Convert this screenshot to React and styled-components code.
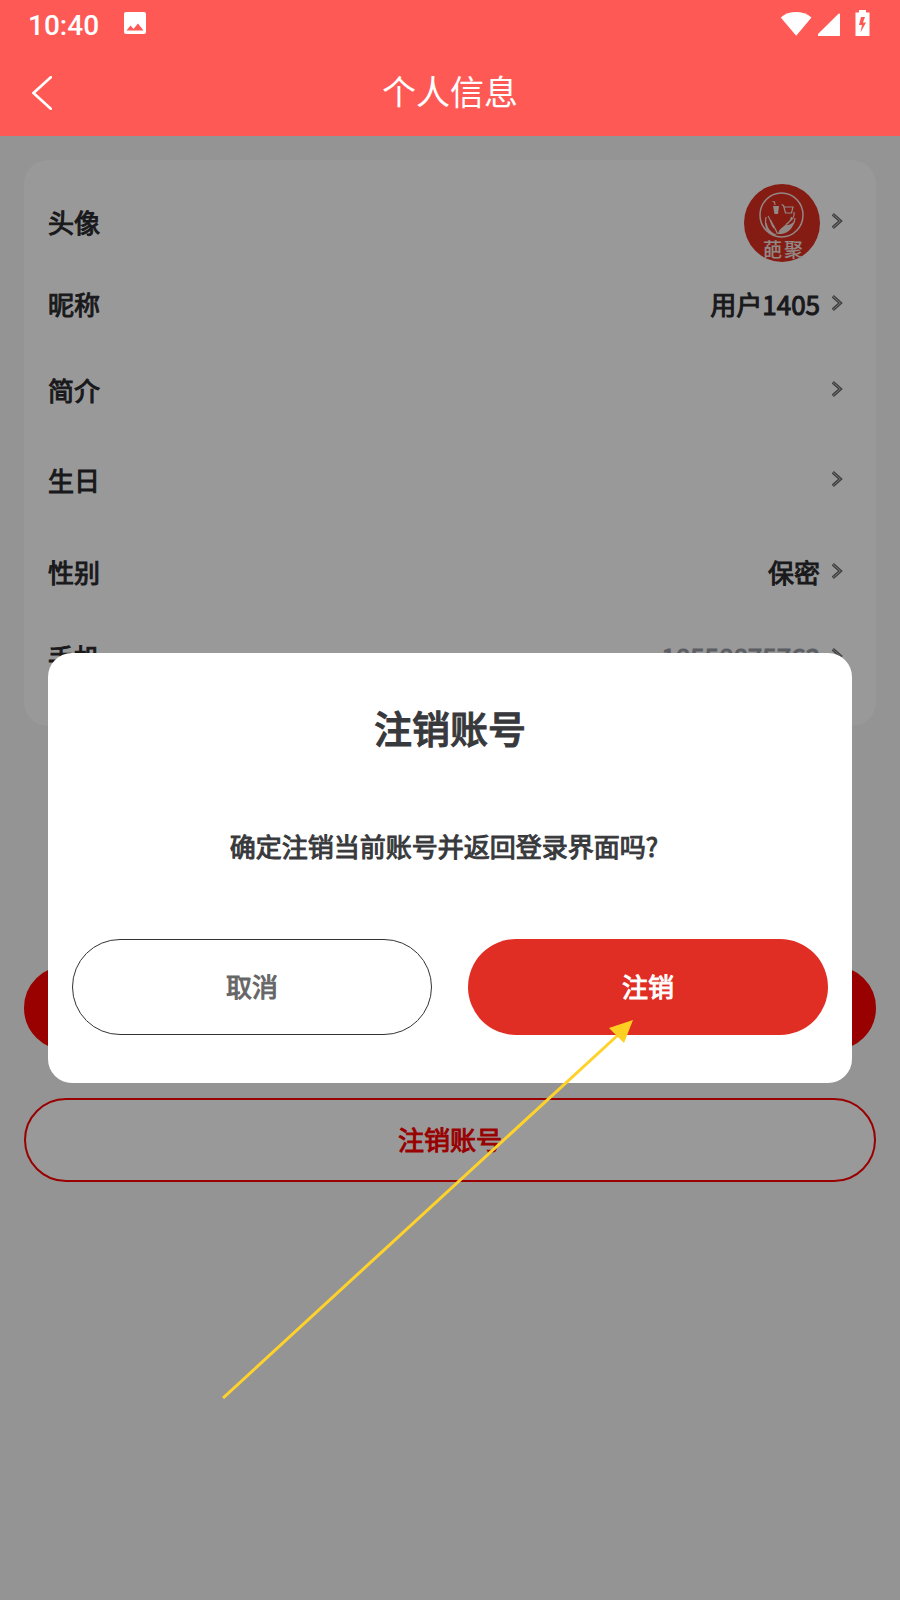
import React, { useState } from 'react';
import styled, { createGlobalStyle, css } from 'styled-components';

const rows = [
    { id: 'avatar', label: '头像', height: 78 },
    { id: 'nickname', label: '昵称', value: '用户1405', height: 86 },
    { id: 'intro', label: '简介', height: 86 },
    { id: 'birthday', label: '生日', height: 94 },
    { id: 'gender', label: '性别', value: '保密', height: 90 },
    { id: 'phone', label: '手机', value: '18558875763', muted: true, height: 80 },
];

const PhotoIcon = () => (
    <svg width="24" height="24" viewBox="0 0 24 24" fill="#fff">
        <path
            fillRule="evenodd"
            d="M3 1h18a2 2 0 0 1 2 2v18a2 2 0 0 1-2 2H3a2 2 0 0 1-2-2V3a2 2 0 0 1 2-2zM3.500 19.500h17L15 12.500l-4.500 5.500-3-3.500z"
        />
    </svg>
);

const WifiIcon = () => (
    <svg width="32" height="26" viewBox="0 0 32 26" fill="#fff">
        <path d="M0.800 7.500C9 0.200 23 0.200 31.500 7.500L16.200 25.800z" />
    </svg>
);

const SignalIcon = () => (
    <svg width="23" height="26" viewBox="0 0 23 26" fill="#fff">
        <path d="M21.500 3.800Q23 3 23 4.500V26H1V24z" />
    </svg>
);

const BatteryIcon = () => (
    <svg width="16" height="26" viewBox="0 0 16 26" fill="#fff">
        <path fillRule="evenodd" d="M5 0h7v2.500h3.500V26H1.500V2.500H5zM7 7l-2 8h3l-1.500 7.500 5.500-10H9L11 7z" />
    </svg>
);

const BackIcon = () => (
    <svg width="20" height="34" viewBox="0 0 20 34" fill="none" stroke="#fff" strokeWidth="2.600" strokeLinecap="round">
        <path d="M18.800 1.200L1.500 17l17.300 15.700" />
    </svg>
);

const Chevron = () => (
    <svg width="12" height="16" viewBox="0 0 12 16" fill="none">
        <path d="M0.800 1.200L8.400 8l-7.600 6.800" stroke="#6a6a6a" strokeWidth="3.200" />
        <path d="M1 1.400L8.400 8l-7.400 6.600" stroke="#c4c4c4" strokeWidth="1" />
    </svg>
);

const Logo = () => (
    <svg width="76" height="78" viewBox="0 0 76 78">
        <ellipse cx="38" cy="39" rx="38" ry="39" fill="#dd2f22" />
        <g fill="none" stroke="#f3e3e0" strokeWidth="1.200">
            <ellipse cx="37.500" cy="31" rx="21.500" ry="22" strokeWidth="1.500" />
            <path d="M37.500 20.500l2 1 2 7.500h6l1.500-6h-8.500" />
            <path d="M31 21l-.5-3-2-.5" />
            <path d="M22 33c-1.500 8 1 15 8 18M24 32c3 4 3 9 6 12M26.500 36c2 5 5 8 7 14M22 39c1 6 5 10 10 12" />
            <path d="M50 28c1 6-3 8-6 11-3 3-6 4-7 10M47.500 33c0 4-3 5-5 7M51 34c0 6-4 10-10 14" />
        </g>
        <path d="M29 22h6l-1 8h-3.500zM34 50c1-5 4-7 9-9 3 0 6-2 7-4-1 7-5 12-13 13z" fill="#f3e3e0" />
        <LogoText x="19" y="73">葩</LogoText>
        <LogoText x="40" y="73">聚</LogoText>
    </svg>
);

const App = () => {
    const [open, setOpen] = useState(true);

    return (
        <Page>
            <GlobalStyle />
            <Header>
                <StatusBar>
                    <StatusGroup>
                        <Clock>10:40</Clock>
                        <PhotoIcon />
                    </StatusGroup>
                    <StatusIcons>
                        <WifiIcon />
                        <SignalIcon />
                        <BatteryIcon />
                    </StatusIcons>
                </StatusBar>
                <NavBar>
                    <BackButton aria-label="返回">
                        <BackIcon />
                    </BackButton>
                    <NavTitle>个人信息</NavTitle>
                </NavBar>
            </Header>
            <Body>
                <Card>
                    {rows.map((row) => (
                        <Row key={row.id} $height={row.height}>
                            <RowText>{row.label}</RowText>
                            <RowEnd>
                                {row.id === 'avatar' ? <Logo /> : <RowText $muted={row.muted}>{row.value}</RowText>}
                                <RowArrow>
                                    <Chevron />
                                </RowArrow>
                            </RowEnd>
                        </Row>
                    ))}
                </Card>
                <Actions>
                    <PageButton $filled>退出登录</PageButton>
                    <PageButton onClick={() => setOpen(true)}>注销账号</PageButton>
                </Actions>
                {open && (
                    <Overlay>
                        <Dialog role="dialog" aria-modal="true" aria-labelledby="dialog-title">
                            <DialogTitle id="dialog-title">注销账号</DialogTitle>
                            <Message>确定注销当前账号并返回登录界面吗?</Message>
                            <DialogActions>
                                <DialogButton onClick={() => setOpen(false)}>取消</DialogButton>
                                <DialogButton $primary onClick={() => setOpen(false)}>注销</DialogButton>
                            </DialogActions>
                            <GuideArrow viewBox="0 0 412 380">
                                <path d="M1 379L396 16" stroke="#ffd22b" strokeWidth="3" />
                                <path d="M411 1L387 9l15 15z" fill="#ffd022" />
                            </GuideArrow>
                        </Dialog>
                    </Overlay>
                )}
            </Body>
        </Page>
    );
};

const GlobalStyle = createGlobalStyle`
    * {
        box-sizing: border-box;
    }

    body {
        margin: 0;
        font-family: 'Noto Sans CJK SC', sans-serif;
    }

    button {
        font-family: inherit;
        cursor: pointer;
    }

    svg {
        display: block;
        flex-shrink: 0;
    }
`;

// Regular cut thickened with a stroke, as Android draws its fake bold
const strongText = css`
    font-size: 26px;
    font-weight: 400;
    -webkit-text-stroke: 1px currentColor;
`;

const Page = styled.div`
    display: flex;
    flex-direction: column;
    min-height: 100vh;
    background-color: #f7f7f7;
`;

const Header = styled.header`
    background-color: #ff5956;
    color: #fff;
`;

const StatusBar = styled.div`
    display: flex;
    justify-content: space-between;
    align-items: center;
    height: 48px;
    padding: 0 30px 2px 28px;
`;

const StatusGroup = styled.div`
    display: flex;
    align-items: center;
    gap: 24px;
`;

const StatusIcons = styled.div`
    display: flex;
    align-items: center;
    gap: 5px;

    svg:last-child {
        margin-left: 9px;
    }
`;

const Clock = styled.span`
    padding-top: 4px;
    font-family: Roboto, sans-serif;
    font-size: 28px;
    font-weight: 500;
`;

const NavBar = styled.div`
    display: grid;
    grid-template-columns: 60px 1fr 60px;
    align-items: center;
    height: 88px;
`;

const BackButton = styled.button`
    padding: 2px 0 0 32px;
    border: none;
    background: none;
`;

const NavTitle = styled.h1`
    margin: 0;
    padding-bottom: 4px;
    text-align: center;
    font-size: 34px;
    font-weight: 400;
`;

const Body = styled.main`
    position: relative;
    flex: 1;
    padding: 24px;
`;

const Card = styled.section`
    padding: 24px 32px 28px 24px;
    border-radius: 24px;
    background-color: #fff;
`;

const Row = styled.div`
    display: flex;
    justify-content: space-between;
    align-items: center;
    height: ${(props) => props.$height}px;
`;

const RowEnd = styled.div`
    display: flex;
    align-items: center;
    gap: 12px;
`;

const RowText = styled.span`
    ${strongText}
    padding-bottom: 4px;
    color: ${(props) => (props.$muted ? '#999da5' : '#2b2b2f')};
`;

const RowArrow = styled.span`
    padding-bottom: 4px;
`;

const LogoText = styled.text`
    fill: #f3e3e0;
    font-size: 19px;
    font-weight: 500;
`;

const Actions = styled.div`
    display: flex;
    flex-direction: column;
    gap: 48px;
    margin-top: 240px;
`;

const PageButton = styled.button`
    ${strongText}
    height: 84px;
    padding-bottom: 4px;
    border: 2px solid #f00;
    border-radius: 42px;
    background-color: ${(props) => (props.$filled ? '#f00' : '#fff')};
    color: ${(props) => (props.$filled ? '#fff' : '#f00')};
`;

const Overlay = styled.div`
    position: absolute;
    inset: 0;
    display: flex;
    align-items: center;
    padding: 0 48px;
    background-color: rgba(0, 0, 0, 0.4);
`;

const Dialog = styled.div`
    position: relative;
    flex: 1;
    padding: 48px 24px;
    border-radius: 24px;
    background-color: #fff;
    color: #38393c;
    text-align: center;
`;

const DialogTitle = styled.h2`
    margin: 0;
    font-size: 38px;
    font-weight: 500;
    line-height: 52px;
    -webkit-text-stroke: 1px currentColor;
`;

const Message = styled.p`
    ${strongText}
    margin: 74px 12px 74px 0;
    line-height: 38px;
`;

const DialogActions = styled.div`
    display: grid;
    grid-template-columns: 1fr 1fr;
    gap: 36px;
`;

const DialogButton = styled.button`
    ${strongText}
    height: 96px;
    padding-bottom: 4px;
    border: ${(props) => (props.$primary ? 'none' : '1px solid #333')};
    border-radius: 48px;
    background-color: ${(props) => (props.$primary ? '#e12e24' : '#fff')};
    color: ${(props) => (props.$primary ? '#fff' : '#666')};
`;

const GuideArrow = styled.svg`
    position: absolute;
    top: 366px;
    left: 174px;
    width: 412px;
    height: 380px;
    pointer-events: none;
`;

export default App;
